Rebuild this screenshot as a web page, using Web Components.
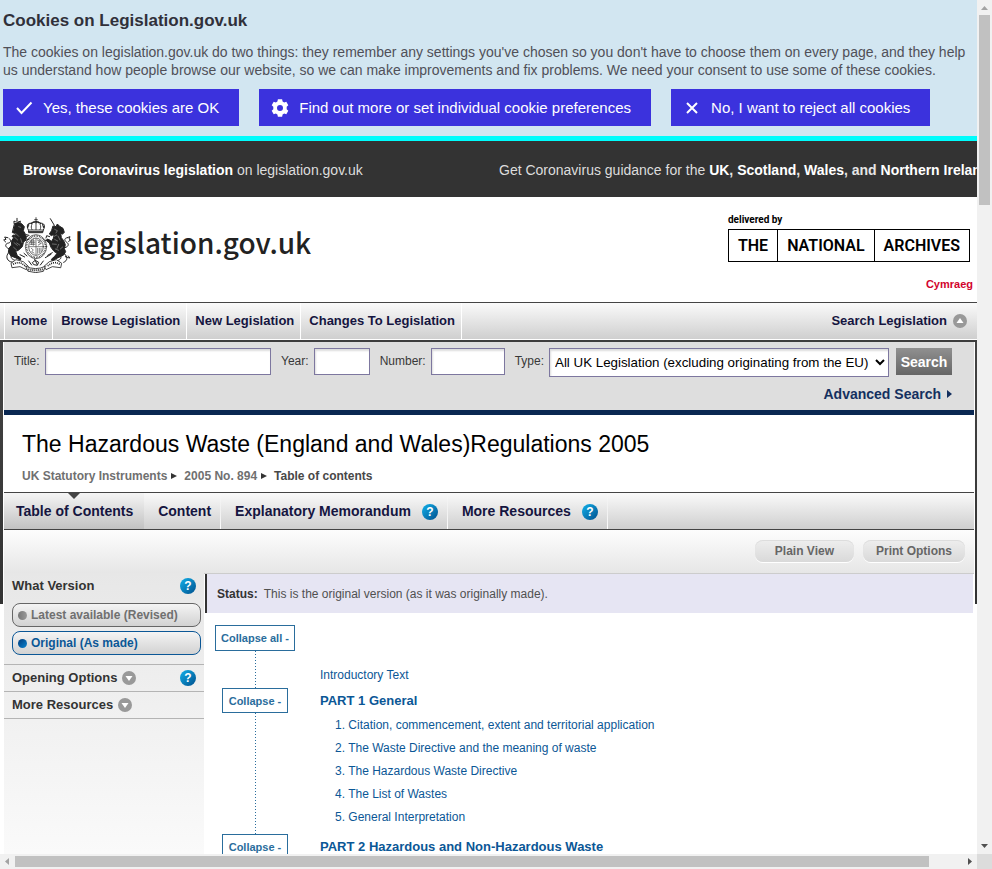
<!DOCTYPE html>
<html lang="en">
<head>
<meta charset="utf-8">
<meta name="viewport" content="width=device-width, initial-scale=1">
<title>The Hazardous Waste (England and Wales) Regulations 2005</title>
<style>
  body { margin: 0; background: #fff; color: #383838; font-family: "Liberation Sans", Arial, sans-serif; font-size: 12px; line-height: 18px; }
</style>
</head>
<body>
<scroll-pane>
  <cookie-banner></cookie-banner>
  <guidance-bar></guidance-bar>
  <site-header></site-header>
  <primary-nav></primary-nav>
  <page-frame>
    <search-form></search-form>
    <title-block></title-block>
    <tab-nav></tab-nav>
    <page-tools></page-tools>
    <content-columns>
      <version-panel slot="side"></version-panel>
      <contents-list></contents-list>
    </content-columns>
  </page-frame>
</scroll-pane>

<script>
const define = (name, css, html) => {
  const template = document.createElement('template');
  template.innerHTML = `<style>
    *, *::before, *::after { box-sizing: border-box; }
    :host { display: block; box-sizing: border-box; }
    a { color: inherit; text-decoration: none; }
    button, input, select { font-family: inherit; margin: 0; }
    ul, ol, p, h1, h2, h3 { margin: 0; padding: 0; list-style: none; }
    ${css}</style>${html}`;
  customElements.define(name, class extends HTMLElement {
    constructor() {
      super();
      this.attachShadow({ mode: 'open' }).append(template.content.cloneNode(true));
    }
  });
};

/* Scrolling viewport with its two bars */
define('scroll-pane', `
  :host { display: grid; height: 100vh; grid-template: minmax(0, 1fr) 15px / minmax(0, 1fr) 15px; }
  .view { overflow: hidden; }
  .bar { background: #f1f1f1; display: flex; align-items: center; }
  .v { flex-direction: column; }
  .thumb { background: #c1c1c1; }
  .v .track, .h .track { flex: 1; display: flex; }
  .v .track { width: 11px; }
  .h .track { height: 11px; }
  .v .thumb { width: 100%; height: 23%; }
  .h .thumb { width: 96.5%; height: 100%; }
  .corner { background: #dcdcdc; }
  svg { display: block; width: 15px; height: 15px; fill: #505050; }
  svg.off { fill: #a3a3a3; }
`, `
  <main class="view"><slot></slot></main>
  <div class="bar v"><svg class="off" viewBox="0 0 15 15"><path d="M4 10h7L7.500 6z"/></svg><div class="track"><div class="thumb"></div></div><svg viewBox="0 0 15 15"><path d="M4 5h7L7.500 9z"/></svg></div>
  <div class="bar h"><svg class="off" viewBox="0 0 15 15"><path d="M9 4v7L5 7.500z"/></svg><div class="track"><div class="thumb"></div></div><svg viewBox="0 0 15 15"><path d="M6 4v7l4-3.500z"/></svg></div>
  <div class="corner"></div>
`);

define('cookie-banner', `
  :host { background: #d2e6f1; border-bottom: 5px solid #00fcfc; padding: 11px 3px 10px; color: #505058; font-size: 14px; }
  h2 { color: #30303a; font-size: 17px; line-height: 20px; margin-bottom: 12px; }
  .row { display: flex; gap: 20px; margin-top: 10px; }
  button { display: flex; align-items: center; height: 37px; padding: 0 20px 0 12px; gap: 10px; border: 0; background: #3b32dd; color: #fff; font-size: 15px; white-space: nowrap; }
  svg { width: 18px; height: 18px; fill: none; stroke: #fff; stroke-width: 2; }
`, `
  <h2>Cookies on Legislation.gov.uk</h2>
  <p>The cookies on legislation.gov.uk do two things: they remember any settings you've chosen so you don't have to choose them on every page, and they help us understand how people browse our website, so we can make improvements and fix problems. We need your consent to use some of these cookies.</p>
  <div class="row">
    <button type="button"><svg viewBox="0 0 18 18"><path d="M2 9l4.500 5L16.500 3.500"/></svg>Yes, these cookies are OK</button>
    <button type="button"><svg viewBox="0 0 18 18"><path fill="#fff" stroke="none" fill-rule="evenodd" d="M6.400 2.500L6.900.2h4.200l.5 2.300 1.600.9 2.100-.6 2 3.500-1.600 1.500v2.400l1.600 1.500-2 3.500-2.100-.6-1.600.9-.5 2.300H6.900l-.5-2.300-1.600-.9-2.100.6-2-3.500 1.600-1.500V7.800L.7 6.300l2-3.500 2.100.6zM9 6a3 3 0 1 0 0 6 3 3 0 0 0 0-6z"/></svg>Find out more or set individual cookie preferences</button>
    <button type="button"><svg viewBox="0 0 18 18"><path d="M4 4l10 10M14 4L4 14"/></svg>No, I want to reject all cookies</button>
  </div>
`);

define('guidance-bar', `
  :host { display: flex; background: #333; color: #ddd; padding: 20px 0 18px 23px; font-size: 14px; white-space: nowrap; }
  p { flex: 1 0 0; }
  p + p { flex: 0 0 478px; min-width: 0; }
  a { color: #fff; font-weight: bold; }
  b { color: #e6e6e6; }
`, `
  <p><a href="#">Browse Coronavirus legislation</a> on legislation.gov.uk</p>
  <p>Get Coronavirus guidance for the <a href="#">UK</a><b>, </b><a href="#">Scotland</a><b>, </b><a href="#">Wales</a><b>, and </b><a href="#">Northern Ireland</a></p>
`);

define('royal-arms', `
  :host { width: 68px; height: 56px; }
  svg { display: block; width: 100%; height: 100%; }
`, `
  <svg viewBox="9 36 204 168" fill="none" stroke="#222" stroke-width="3" stroke-linecap="round" aria-hidden="true">
    <path fill="#fff" stroke-width="3" d="M85 75c-7-13-2-22 9-20 5-7 21-7 27 0 11-2 16 7 9 20l-2 8H87z"/>
    <path stroke-width="2.500" d="M108 38v16M104 44h8M108 54v20M96 57c-3 7-3 12 0 17M120 57c3 7 3 12 0 17M87 75h41"/>
    <path stroke-width="4" stroke-dasharray="2 4" d="M89 80h38"/>
    <path stroke-width="4" stroke-dasharray="3 4" d="M83 67l3-8M131 67l-3-8M94 55q14-8 28 0"/>
    <ellipse cx="108" cy="125" rx="32" ry="36" fill="#fff" stroke-width="2"/>
    <ellipse cx="108" cy="125" rx="28" ry="32" stroke-width="5" stroke-dasharray="2 3" stroke-linecap="butt"/>
    <ellipse cx="108" cy="125" rx="22" ry="26" stroke-width="2"/>
    <path stroke-width="2" stroke="#444" d="M108 100v50M87 125h42M92 108h13M91 113h14M91 118h14M112 105l10 3-8 4 10 3-9 5M94 130l6 5-5 5 7 4M113 130v15M118 130v13M123 130v9M100 103v18M95 105v14"/>
    <path fill="#222" stroke-width="3" d="M44 57l9-5 12 4 8 9-3 12 7 12 2 12-9 12-3 12-12 11-8 3 5 13 11 8-2 5-15-7-13-5-8-11 2-12 8-10-1-11 7-11-5-4 4-4 9 1-4-6-7-2z"/>
    <path stroke-width="3" d="M42 55v-7l5 3 4-5 5 5 5-3-1 7zM51 44v-4M74 98l10-5M75 107l12-5M79 89l8 2M25 144c-8 10-5 21 6 26l8 2M35 146c-5 9-1 17 8 19M29 132c-17-5-14-17-3-18 7-2 8-9 1-14M23 98l-9-2 4 7-7 2 6 6"/>
    <path stroke="#fff" stroke-width="1" d="M48 86l8 8M44 97l9 8M62 101l4 12M42 113l10 8M56 65l6 2M41 127l9 8M59 120l-9-6"/>
    <path fill="#222" stroke-width="3" d="M160 63l8 2 4-8 7 7 10 6 4 12-6 6-5-5 2 15 7 9 5 12-3 12 4 9-6 10-10 5-13 6-11 7-3-5 10-9 7-9-9-6-9-12-5-13-9-7 3-5 13 7 5-9 2-12-8 4-6-5 6-9z"/>
    <path stroke-width="3" d="M151 41l12 20M149 95l-9-3-2 7M148 105l-13 1M190 129c16-2 19-12 9-18-7-5-6-12 3-13M202 98l8-3-3 7 5 3-6 4M194 147c9 8 10 20-3 25M178 150c9 7 5 13-5 17M196 155l12 4M205 153l4 5"/>
    <path stroke="#fff" stroke-width="1" d="M164 73l8 4-4 7M170 90l-9 5M164 103l9 5M157 117l12 1M176 118l-5 12M166 132l10 4M181 132l7-6M174 93l6 12"/>
    <path stroke-width="3" d="M60 149l14 7M72 145l9 8M143 151l14-8M136 158l17-10"/>
    <path fill="#fff" stroke-width="2.500" d="M34 174l14-10 22 6 15 14-6 10-19-9-23 3zM184 174l-15-10-21 6-16 14 6 10 19-9 24 3z"/>
    <path stroke-width="5" stroke-dasharray="3 3" stroke-linecap="butt" d="M39 178q13-8 25-3l14 9M179 178q-12-8-24-3l-15 9"/>
    <path fill="#fff" stroke-width="2.500" d="M78 184q28 14 58 0l-6 15q-22 8-45 0z"/>
    <path stroke-width="6" stroke-dasharray="3 3" stroke-linecap="butt" d="M85 193q22 5 44 0"/>
    <path stroke-width="3" d="M98 172l8-6 10 6-4 9-10-2zM86 168l9 12M130 168l-9 12M104 163l8 16"/>
  </svg>
`);

define('site-header', `
  :host { display: flex; justify-content: space-between; padding: 16px 7px 0 3px; height: 105px; color: #000; }
  .brand { display: flex; align-items: flex-start; gap: 4px; color: #222; font: 500 28px/58px "Noto Sans CJK SC", sans-serif; white-space: nowrap; }
  royal-arms { margin-top: 4px; }
  .tna { font: 700 10px/14px "Roboto", sans-serif; display: block; }
  .boxes { display: flex; margin-top: 2px; border: 1px solid #000; width: fit-content; font-size: 16px; font-weight: 600; line-height: 31px; }
  .boxes span { padding: 0 9px; }
  .boxes span + span { border-left: 1px solid #000; }
  .lang { display: block; text-align: right; color: #d2042d; font: bold 11px/16px "Liberation Sans", sans-serif; margin: 14px -3px 0 0; }
`, `
  <a class="brand" href="#"><royal-arms></royal-arms><span>legislation.gov.uk</span></a>
  <div>
    <a class="tna" href="#">delivered by<span class="boxes"><span>THE</span><span>NATIONAL</span><span>ARCHIVES</span></span></a>
    <a class="lang" href="#">Cymraeg</a>
  </div>
`);

define('primary-nav', `
  nav { display: flex; border-top: 1px solid #444; border-bottom: 1px solid #fff; height: 38px; padding: 0 10px 0 4px; background: linear-gradient(#fafafa, #cfcfcf); color: #151540; font-size: 13px; font-weight: bold; white-space: nowrap; }
  ul { display: flex; flex: 1; border-left: 1px solid #fff; }
  li { padding: 9px 6px 0 8px; border-right: 1px solid #fff; }
  li:first-child { padding: 9px 5px 0 6px; }
  .toggle { display: flex; align-items: center; gap: 6px; }
  svg { width: 14px; height: 14px; }
`, `
  <nav><ul>
    <li><a href="#">Home</a></li><li><a href="#">Browse Legislation</a></li><li><a href="#">New Legislation</a></li><li><a href="#">Changes To Legislation</a></li>
  </ul><a class="toggle" href="#">Search Legislation <svg viewBox="0 0 14 14"><circle cx="7" cy="7" r="7" fill="#999"/><path d="M3.500 9h7L7 4z" fill="#fff"/></svg></a></nav>
`);

define('page-frame', `
  :host { padding: 2px 3px 0 4px; background:
    linear-gradient(#3d3d3d, #3d3d3d) 0 0 / 100% 2px no-repeat,
    linear-gradient(#444, #333) 0 0 / 3px 264px no-repeat,
    linear-gradient(#444, #333) 100% 0 / 2px 264px no-repeat; }
`, `<slot></slot>`);

define('search-form', `
  form { background: #dedede; border-bottom: 5px solid #0a2852; padding: 6px 22px 7px 10px; color: #383838; }
  .row { display: flex; align-items: flex-start; gap: 10px; }
  label { display: flex; gap: 5px; line-height: 26px; }
  label.grow { flex: 1; }
  label.type { margin-right: -3px; }
  input, select { border: 1px solid #7d779f; background: #fff; box-shadow: inset 1px 2px 2px #ddd; border-radius: 0; height: 27px; padding: 0 1px; color: #000; }
  .grow input { flex: 1; min-width: 0; }
  .year { width: 56px; } .number { width: 74px; }
  select { height: 29px; width: 340px; }
  button { height: 27px; width: 56px; border: 0; padding: 0; background: linear-gradient(#909090, #666); color: #fff; font-size: 14px; font-weight: bold; }
  .more { display: flex; justify-content: flex-end; align-items: center; gap: 6px; margin-top: 8px; color: #14305f; font-size: 14px; font-weight: bold; }
  svg { width: 5px; height: 8px; fill: currentColor; }
`, `
  <form>
    <div class="row">
      <label class="grow">Title: <input type="text"></label>
      <label>Year: <input class="year" type="text"></label>
      <label>Number: <input class="number" type="text"></label>
      <label class="type">Type: <select><option>All UK Legislation (excluding originating from the EU)</option></select></label>
      <button type="button">Search</button>
    </div>
    <a class="more" href="#">Advanced Search <svg viewBox="0 0 5 8"><path d="M0 0l5 4-5 4z"/></svg></a>
  </form>
`);

define('title-block', `
  :host { padding: 14px 18px 7px; }
  h1 { color: #000; font-size: 23px; font-weight: normal; line-height: 30px; margin-bottom: 8px; }
  ol { display: flex; gap: 7px; color: #707070; font-weight: bold; }
  li { display: flex; align-items: center; gap: 4px; }
  .here { color: #484848; }
  svg { width: 6px; height: 6px; fill: #333; }
`, `
  <h1>The Hazardous Waste (England and Wales)Regulations 2005</h1>
  <ol>
    <li><a href="#">UK Statutory Instruments</a><svg viewBox="0 0 6 6"><path d="M0 0l6 3-6 3z"/></svg></li>
    <li><a href="#">2005 No. 894</a><svg viewBox="0 0 6 6"><path d="M0 0l6 3-6 3z"/></svg></li>
    <li class="here">Table of contents</li>
  </ol>
`);

define('help-button', `
  :host { width: 16px; height: 16px; }
  a { display: block; border-radius: 50%; background: linear-gradient(135deg, #12b1ea, #004f8d); color: #fff; font-size: 12px; font-weight: bold; line-height: 16px; text-align: center; }
`, `<a href="#" aria-label="Help">?</a>`);

define('tab-nav', `
  ul { display: flex; height: 38px; border: solid #444; border-width: 1px 0; background: linear-gradient(#fafafa, #cfcfcf); color: #151540; font-size: 14px; font-weight: bold; white-space: nowrap; }
  li { display: flex; gap: 11px; padding: 9px 10px 0 14px; background: linear-gradient(transparent, #fff) right / 1px 100% no-repeat; }
  .on { position: relative; padding: 9px 11px 0 12px; background: linear-gradient(#f5f5f5, #c2c2c2); }
  .on svg { position: absolute; top: 0; left: calc(50% - 6px); width: 12px; height: 6px; fill: #444; }
  help-button { margin-top: 2px; }
`, `
  <ul>
    <li class="on"><svg viewBox="0 0 12 6"><path d="M0 0h12L6 6z"/></svg><a href="#">Table of Contents</a></li>
    <li><a href="#">Content</a></li>
    <li><a href="#">Explanatory Memorandum</a><help-button></help-button></li>
    <li><a href="#">More Resources</a><help-button></help-button></li>
  </ul>
`);

define('page-tools', `
  :host { display: flex; justify-content: flex-end; gap: 9px; height: 43px; padding: 10px 9px 0; background: linear-gradient(#fdfdfd, #e6e6e6); }
  a { display: block; height: 22px; padding: 0 13px; border-radius: 8px; background: linear-gradient(#eee, #d9d9d9); box-shadow: 0 1px 0 #fff, inset 0 1px 0 #ddd; color: #666; font-weight: bold; line-height: 22px; }
  .wide { padding: 0 20px; }
`, `<a class="wide" href="#">Plain View</a><a href="#">Print Options</a>`);

define('content-columns', `
  :host { display: grid; grid-template-columns: 200px minmax(0, 1fr); background: linear-gradient(#e7e7e7, #fafafa 280px, #fff 500px); }
  .main { background: #fff; border-top: 1px solid #ccc; min-height: 300px; }
`, `<slot name="side"></slot><div class="main"><slot></slot></div>`);

define('version-panel', `
  :host { color: #333; }
  section { display: flex; flex-wrap: wrap; align-items: center; gap: 5px; padding: 4px 8px 4px; border-bottom: 1px solid #b4b4b4; min-height: 27px; }
  .versions { padding: 4px 3px 9px 8px; }
  h2 { font-size: 13px; line-height: 18px; }
  help-button { margin-left: auto; }
  .versions help-button { margin-right: 5px; }
  ul { flex-basis: 100%; display: grid; gap: 4px; margin-top: 3px; }
  li { border: 1px solid #666; border-radius: 8px; background: linear-gradient(#f4f4f4, #d2d2d2); color: #707070; font-weight: bold; line-height: 22px; padding: 0 5px; }
  li a { display: flex; align-items: center; gap: 4px; height: 22px; }
  li a::before { content: ""; width: 9px; height: 9px; border-radius: 50%; background: linear-gradient(90deg, #777, #999); }
  .on { border-color: #0b5796; color: #0b5796; }
  .on a::before { background: linear-gradient(135deg, #003c7c, #0a84d0); }
  svg { width: 14px; height: 14px; }
`, `
  <section class="versions"><h2>What Version</h2><help-button></help-button>
    <ul><li><a href="#">Latest available (Revised)</a></li><li class="on"><a href="#">Original (As made)</a></li></ul></section>
  <section><h2>Opening Options</h2><svg viewBox="0 0 14 14"><circle cx="7" cy="7" r="7" fill="#999"/><path d="M3.500 5h7L7 10z" fill="#fff"/></svg><help-button></help-button></section>
  <section><h2>More Resources</h2><svg viewBox="0 0 14 14"><circle cx="7" cy="7" r="7" fill="#999"/><path d="M3.500 5h7L7 10z" fill="#fff"/></svg></section>
`);

define('contents-list', `
  .status { margin: 0 1px 12px; border-left: 2px solid #333; background: #e6e5f3; padding: 11px 10px 10px; }
  .status b { margin-right: 3px; color: #333; }
  .status p { color: #505050; }
  .tree { padding-left: 11px; color: #0b5796; }
  button { display: block; border: 1px solid #2a6d9c; background: #fff; color: #2a6d9c; font-size: 11px; font-weight: bold; padding: 0; }
  .all { width: 80px; height: 26px; }
  .sub { width: 66px; height: 25px; }
  .row { display: grid; grid-template-columns: 80px minmax(0, 1fr); column-gap: 25px; }
  .rail { display: grid; justify-items: center; align-content: stretch; grid-template-rows: auto 1fr; }
  .rail .line { width: 1px; height: 100%; background: repeating-linear-gradient(#2a6d9c 0 1px, transparent 1px 3px); }
  h3 { font-size: 13px; line-height: 25px; margin-bottom: 1px; }
  li { line-height: 23px; padding-left: 15px; }
  .intro { padding: 16px 0 4px; line-height: 17px; }
  .part { height: 146px; }
`, `
  <div class="status"><p><b>Status:</b> This is the original version (as it was originally made).</p></div>
  <div class="tree">
    <button class="all" type="button">Collapse all -</button>
    <div class="row"><div class="rail"><span></span><span class="line"></span></div><p class="intro"><a href="#">Introductory Text</a></p></div>
    <div class="row part"><div class="rail"><button class="sub" type="button">Collapse -</button><span class="line"></span></div>
      <div><h3><a href="#">PART 1 General</a></h3>
        <ol>
          <li><a href="#">1. Citation, commencement, extent and territorial application</a></li>
          <li><a href="#">2. The Waste Directive and the meaning of waste</a></li>
          <li><a href="#">3. The Hazardous Waste Directive</a></li>
          <li><a href="#">4. The List of Wastes</a></li>
          <li><a href="#">5. General Interpretation</a></li>
        </ol></div></div>
    <div class="row"><div class="rail"><button class="sub" type="button">Collapse -</button><span class="line"></span></div>
      <h3><a href="#">PART 2 Hazardous and Non-Hazardous Waste</a></h3></div>
  </div>
`);
</script>
</body>
</html>
